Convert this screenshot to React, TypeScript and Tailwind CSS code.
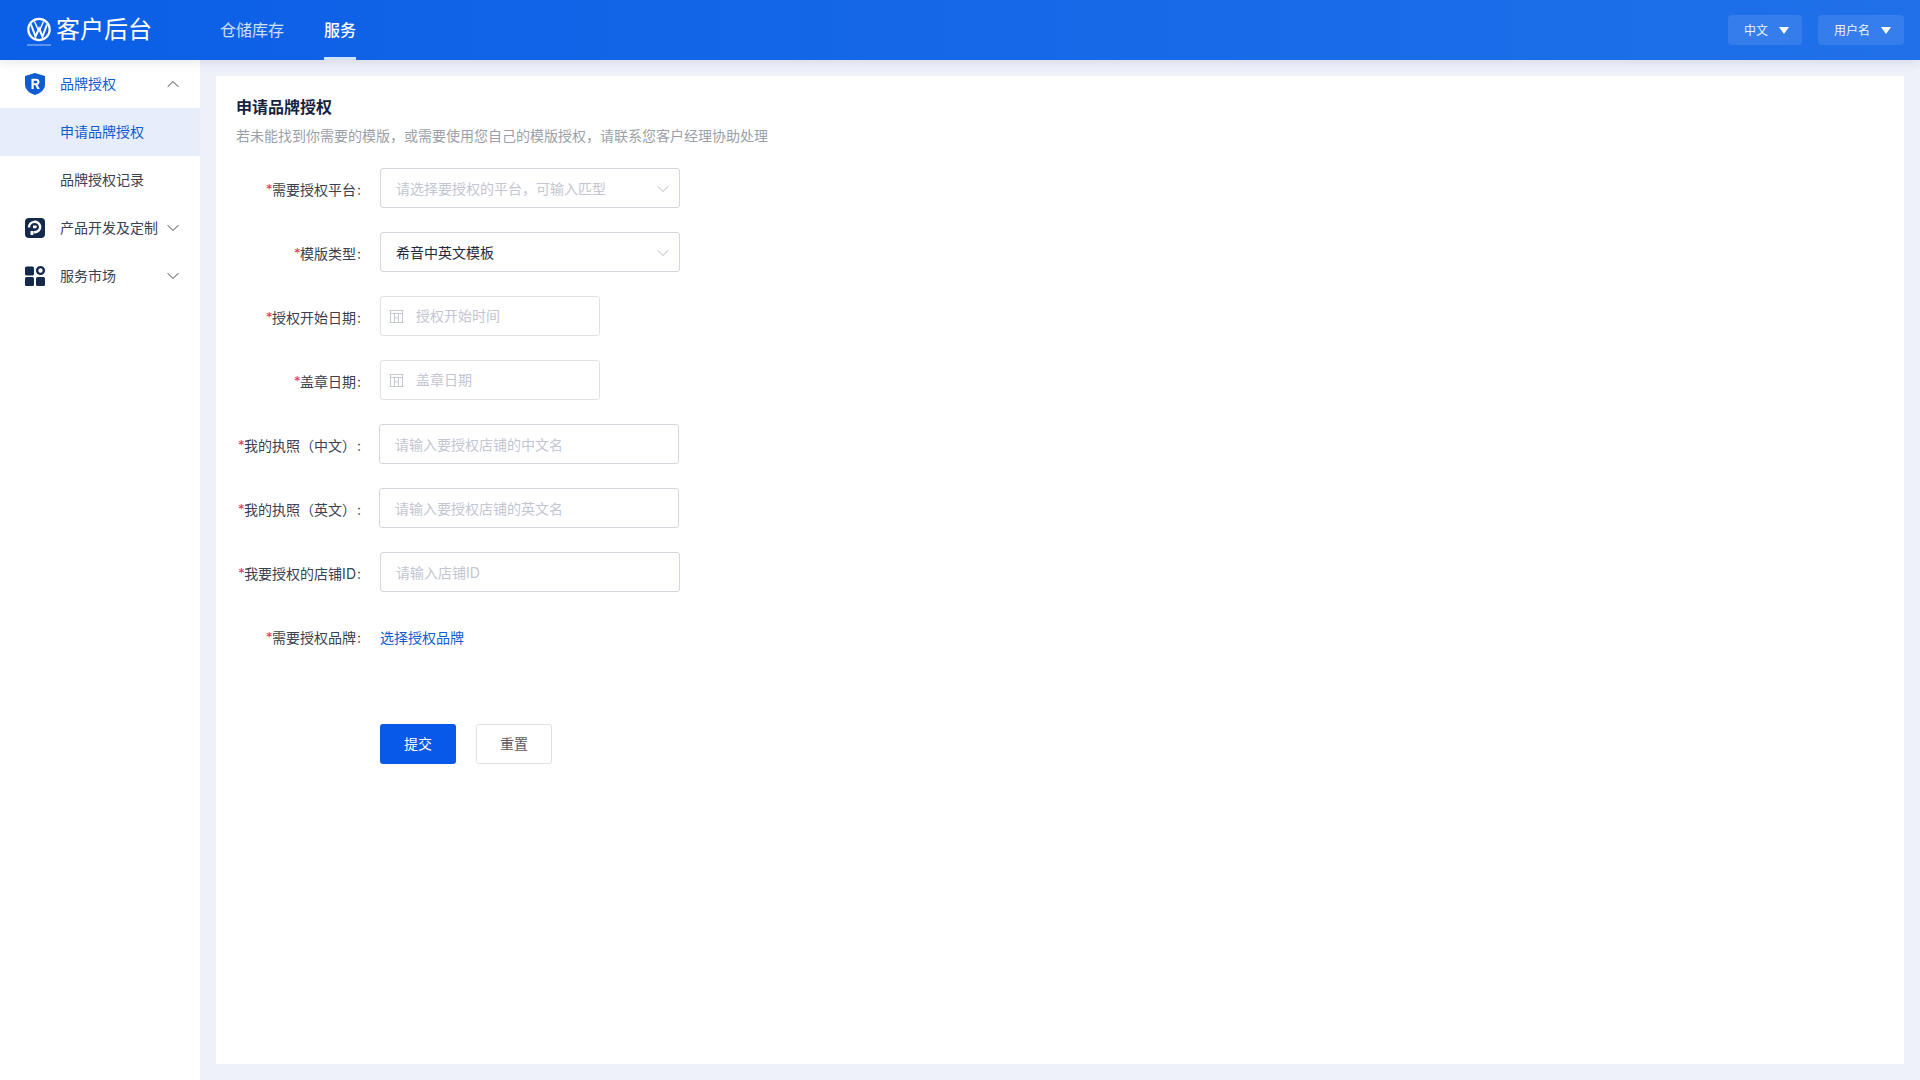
import { ChevronDown, ChevronUp } from 'lucide-react'
import type { ReactNode } from 'react'

const Logo = () => (
    <svg width="26" height="30" viewBox="0 0 26 30" fill="none" className="shrink-0">
        <circle cx="13" cy="12.5" r="10.7" stroke="#fff" strokeWidth="2.2" />
        <path d="M5 7.5 L9.5 19.5 L13 11.5 L16.5 19.5 L21 7.5" stroke="#fff" strokeWidth="2" />
        <path d="M8.5 4.5 L12.5 13.5 M13.5 13.5 L17.5 4.5" stroke="#fff" strokeWidth="1.4" />
        <rect x="1" y="27.5" width="24" height="1" fill="#fff" opacity="0.65" />
    </svg>
)

const ShieldIcon = () => (
    <svg width="22" height="24" viewBox="0 0 22 24" className="shrink-0">
        <path d="M11 1 L21 4 V12.5 C21 18 16 21.5 11 23 C6 21.5 1 18 1 12.5 V4 Z" fill="#0f5bd0" />
        <path d="M7.5 17 V6.8 H12 C14.3 6.8 15.5 8 15.5 9.9 C15.5 11.4 14.7 12.4 13.4 12.8 L15.8 17 H13.3 L11.2 13.1 H9.7 V17 Z M9.7 8.7 V11.2 H11.8 C12.8 11.2 13.3 10.7 13.3 9.9 C13.3 9.2 12.8 8.7 11.8 8.7 Z" fill="#fff" />
    </svg>
)

const PIcon = () => (
    <svg width="22" height="22" viewBox="0 0 22 22" className="shrink-0">
        <rect x="1" y="1" width="20" height="20" rx="4" fill="#15294b" />
        <path d="M5 10.5 A5.6 5.2 0 1 1 11 15.2 H9.5" stroke="#fff" strokeWidth="2.4" fill="none" />
        <path d="M9 8.5 H11.5 A1.3 1.3 0 0 1 11.5 11.2 H9 Z" fill="#fff" />
        <rect x="6.5" y="14" width="2.8" height="4" fill="#fff" />
    </svg>
)

const GridIcon = () => (
    <svg width="22" height="22" viewBox="0 0 22 22" className="shrink-0">
        <rect x="1" y="1.5" width="9" height="9" rx="1.5" fill="#15294b" />
        <rect x="1" y="12" width="9" height="9" rx="1.5" fill="#15294b" />
        <rect x="12" y="12" width="9" height="9" rx="1.5" fill="#15294b" />
        <circle cx="16.5" cy="5.5" r="3.4" stroke="#15294b" strokeWidth="2.4" fill="none" />
    </svg>
)

const CalendarIcon = () => (
    <svg width="15" height="15" viewBox="0 0 15 15" fill="none" stroke="#c6cad4" strokeWidth="1" className="shrink-0">
        <path d="M0.5 1.5 H14.5 M1.5 1.5 V13.5 M13.5 1.5 V13.5 M0.5 13.5 H14.5 M1.5 4.5 H13.5 M5.5 4.5 V13.5 M9.5 4.5 V13.5 M5.5 9 H9.5" />
    </svg>
)

const Triangle = () => (
    <span className="w-0 h-0 border-x-[5px] border-x-transparent border-t-[7px] border-t-white" />
)

const Label = ({ text }: { text: string }) => (
    <label className="w-[136px] shrink-0 -ml-[2px] flex justify-end items-center text-sm text-[#3a4150] whitespace-nowrap mr-[10px] pt-[3px]">
        <span className="w-[6px] text-[#e8305c] text-[13px] overflow-hidden">*</span>
        <span>{text}</span>
        <span className="w-[14px] pl-[1px]">:</span>
    </label>
)

const Row = ({ label, children }: { label: string; children: ReactNode }) => (
    <div className="flex items-center h-10 mb-6 pl-[20px]">
        <Label text={label} />
        {children}
    </div>
)

const box = 'h-10 border border-[#d3d6dd] rounded-[3px] bg-white flex items-center text-sm outline-none'
const ph = 'placeholder:text-[#c3c6d2]'

const Sel = ({ value, holder }: { value?: string; holder?: string }) => (
    <div className={`${box} w-[300px] pl-[15px] pr-[6px] justify-between`}>
        <span className={`pt-[2px] ${value ? 'text-[#1f2a3d]' : 'text-[#c3c6d2]'}`}>{value ?? holder}</span>
        <ChevronDown size={20} strokeWidth={1} color="#a8adb8" className="mt-px" />
    </div>
)

const DateBox = ({ holder }: { holder: string }) => (
    <div className={`${box} w-[220px] pl-[8px] gap-[12px] border-[#dfe1e6]`}>
        <CalendarIcon />
        <input placeholder={holder} className={`outline-none text-sm w-[160px] ${ph}`} />
    </div>
)

const Text = ({ holder, w = 'w-[300px] -ml-px' }: { holder: string; w?: string }) => (
    <input placeholder={holder} className={`${box} ${w} px-[15px] ${ph}`} />
)

const SideItem = ({ icon, text, open, active }: { icon: ReactNode; text: string; open?: boolean; active?: boolean }) => (
    <div className={`h-12 flex items-center pl-6 pr-[17px] text-sm ${active ? 'text-[#0f5bd0]' : 'text-[#3a4150]'}`}>
        <span className="w-9 shrink-0">{icon}</span>
        <span className="flex-1 whitespace-nowrap">{text}</span>
        {open
            ? <ChevronUp size={20} strokeWidth={1.2} color="#3a4150" />
            : <ChevronDown size={20} strokeWidth={1.2} color="#3a4150" />}
    </div>
)

const HeadSelect = ({ text, w }: { text: string; w: string }) => (
    <div className={`h-[30px] ${w} rounded-[4px] bg-white/10 flex items-center justify-between pl-4 pr-[13px] text-xs text-white/90`}>
        <span className="pt-[2px]">{text}</span>
        <Triangle />
    </div>
)

export default function App() {
    return <div className="h-screen w-full flex flex-col bg-[#eef1f9] font-['Inter','Noto_Sans_CJK_SC',sans-serif] overflow-hidden">
        <header className="h-[60px] shrink-0 flex items-center bg-gradient-to-r from-[#0b5fe6] to-[#1f70e9] relative z-10 shadow-[0_2px_10px_rgba(40,50,90,0.12)]">
            <div className="w-[220px] pl-[26px] flex items-center gap-[4px] text-white text-2xl">
                <span className="mt-1"><Logo /></span>
                <span>客户后台</span>
            </div>
            <nav className="flex h-full gap-10 text-base">
                <span className="flex items-center text-white/80">仓储库存</span>
                <span className="flex items-center text-white font-medium border-b-[3px] border-white/80 pt-[3px]">服务</span>
            </nav>
            <div className="ml-auto flex gap-4 pr-4">
                <HeadSelect text="中文" w="w-[74px]" />
                <HeadSelect text="用户名" w="w-[86px]" />
            </div>
        </header>
        <div className="flex-1 flex min-h-0">
            <aside className="w-[200px] shrink-0 bg-white">
                <SideItem icon={<ShieldIcon />} text="品牌授权" open active />
                <div className="h-12 flex items-center pl-[60px] text-sm text-[#0f5bd0] bg-[#e6eefb]">申请品牌授权</div>
                <div className="h-12 flex items-center pl-[60px] text-sm text-[#3a4150]">品牌授权记录</div>
                <SideItem icon={<PIcon />} text="产品开发及定制" />
                <SideItem icon={<GridIcon />} text="服务市场" />
            </aside>
            <main className="flex-1 min-w-0 pt-4 pr-4 pb-4 pl-4">
                <div className="h-full bg-white">
                    <h1 className="pl-5 pt-[19px] text-base leading-6 font-bold text-[#15233f]">申请品牌授权</h1>
                    <p className="pl-5 pt-[6px] text-sm leading-[22px] text-[#9b9fa8] mb-[21px]">若未能找到你需要的模版，或需要使用您自己的模版授权，请联系您客户经理协助处理</p>
                    <Row label="需要授权平台"><Sel holder="请选择要授权的平台，可输入匹型" /></Row>
                    <Row label="模版类型"><Sel value="希音中英文模板" /></Row>
                    <Row label="授权开始日期"><DateBox holder="授权开始时间" /></Row>
                    <Row label="盖章日期"><DateBox holder="盖章日期" /></Row>
                    <Row label="我的执照（中文）"><Text holder="请输入要授权店铺的中文名" /></Row>
                    <Row label="我的执照（英文）"><Text holder="请输入要授权店铺的英文名" /></Row>
                    <Row label="我要授权的店铺ID"><Text holder="请输入店铺ID" w="w-[300px]" /></Row>
                    <Row label="需要授权品牌"><a className="text-sm text-[#0f5bd0] pt-[3px]">选择授权品牌</a></Row>
                    <div className="flex gap-5 pl-[164px] mt-[68px]">
                        <button className="w-[76px] h-10 rounded-[3px] bg-[#0859e8] text-white text-sm">提交</button>
                        <button className="w-[76px] h-10 rounded-[3px] border border-[#dfe1e6] bg-white text-[#555b66] text-sm">重置</button>
                    </div>
                </div>
            </main>
        </div>
    </div>
}
